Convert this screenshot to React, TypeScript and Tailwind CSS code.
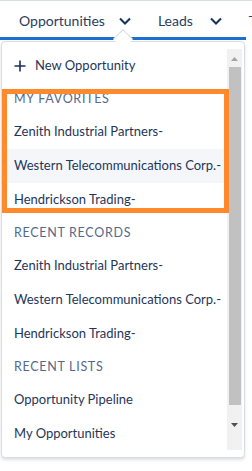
import React from "react";

const font = { fontFamily: "Lato, 'Open Sans', Arial, sans-serif" };

function Chevron() {
  return (
    <svg width="12" height="8" viewBox="0 0 12 8" className="shrink-0">
      <polyline points="1,1.5 6,6.5 11,1.5" fill="none" stroke="#16325c" strokeWidth="2" />
    </svg>
  );
}

function Header({ label }: { label: string }) {
  return (
    <div className="h-[32px] flex items-center pl-[12px] text-[12.5px] uppercase tracking-[0.7px] text-[#54698d]">
      {label}
    </div>
  );
}

function Item({ label, active = false }: { label: string; active?: boolean }) {
  return (
    <div
      className={`h-[34px] flex items-center pl-[12px] text-[13px] text-[#1f3659] whitespace-nowrap ${
        active ? "bg-[#f4f6f9]" : ""
      }`}
    >
      {label}
    </div>
  );
}

export default function App() {
  return (
    <div className="relative w-[252px] h-[471px] bg-white overflow-hidden" style={font}>
      {/* Top nav */}
      <div className="h-[37px] border-t border-[#d8dde6] flex items-center whitespace-nowrap overflow-hidden text-[14px] text-[#2a3d5e] pl-[19px] pt-[3px]">
        <span>Opportunities</span>
        <span className="ml-[14px] flex items-center">
          <Chevron />
        </span>
        <span className="ml-[27px]">Leads</span>
        <span className="ml-[17px] flex items-center">
          <Chevron />
        </span>
        <span className="ml-[27px]">T</span>
      </div>
      <div className="h-[3px] w-[246px] bg-[#1b6fd0]" />

      {/* Dropdown */}
      <div className="mt-[1px] ml-[1px] w-[244px] h-[417px] border border-[#d8dde6] rounded-[4px] bg-white shadow-[0_2px_3px_0_rgba(0,0,0,0.12)] py-[7px] pr-[2px] flex">
        <div className="flex-1 overflow-hidden">
          <div className="h-[34px] flex items-center pl-[12px] text-[13px] text-[#1f3659]">
            <svg width="12" height="12" viewBox="0 0 12 12" className="mr-[9px]">
              <path d="M6 0.5 V11.5 M0.5 6 H11.5" stroke="#16325c" strokeWidth="1.6" />
            </svg>
            New Opportunity
          </div>
          <Header label="My Favorites" />
          <Item label="Zenith Industrial Partners-" />
          <Item label="Western Telecommunications Corp.-" active />
          <Item label="Hendrickson Trading-" />
          <Header label="Recent Records" />
          <Item label="Zenith Industrial Partners-" />
          <Item label="Western Telecommunications Corp.-" />
          <Item label="Hendrickson Trading-" />
          <Header label="Recent Lists" />
          <Item label="Opportunity Pipeline" />
          <Item label="My Opportunities" />
        </div>

        {/* Scrollbar */}
        <div className="w-[15px] bg-[#f1f1f1] flex flex-col items-stretch">
          <div className="h-[18px] flex items-center justify-center pt-[2px]">
            <svg width="7" height="4" viewBox="0 0 7 4">
              <polygon points="0,4 3.5,0 7,4" fill="#a3a3a3" />
            </svg>
          </div>
          <div className="h-[338px] ml-[2px] mr-[1px] bg-[#c1c1c1]" />
          <div className="flex-1 flex items-center justify-center pb-[6px]">
            <svg width="7" height="4" viewBox="0 0 7 4">
              <polygon points="0,0 7,0 3.5,4" fill="#505050" />
            </svg>
          </div>
        </div>
      </div>

      {/* Dropdown nubbin */}
      <div className="absolute left-[116px] top-[32px] w-[14px] h-[14px] rotate-45 bg-white border-l border-t border-[#d8dde6]" />

      {/* Annotation highlight */}
      <div className="absolute left-[2px] top-[89px] w-[227px] h-[124px] border-[5px] border-[#ff8a2b]" />
    </div>
  );
}
